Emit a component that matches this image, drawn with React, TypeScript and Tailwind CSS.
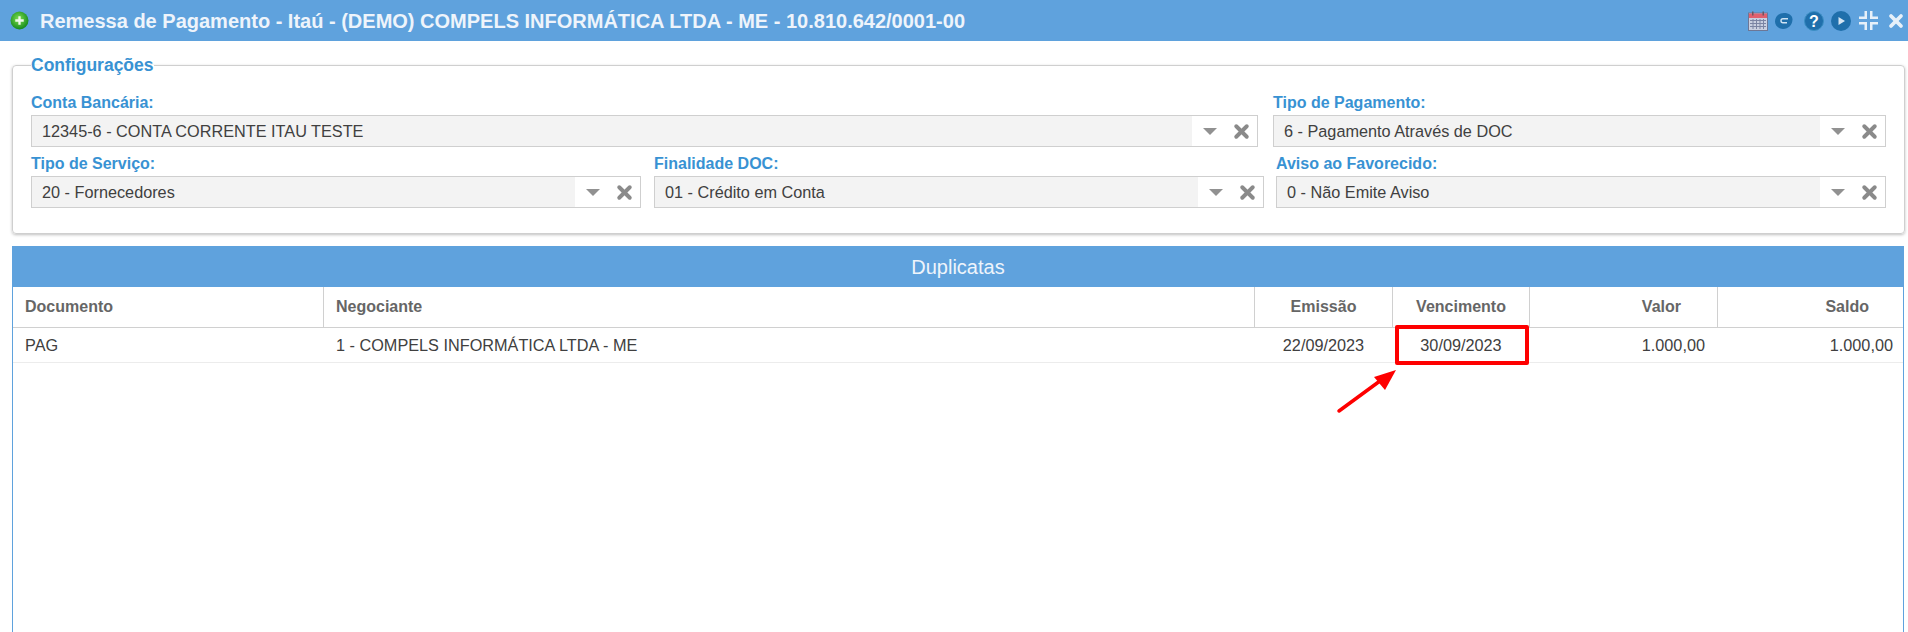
import { X } from 'lucide-react'

const FONT = "font-['Liberation_Sans',Arial,sans-serif]"

const COLUMNS = [
  { label: 'Documento', value: 'PAG', width: 'w-[311px]', head: 'text-left pl-3', cell: 'text-left pl-3' },
  { label: 'Negociante', value: '1 - COMPELS INFORMÁTICA LTDA - ME', width: 'w-[931px]', head: 'text-left pl-3', cell: 'text-left pl-3' },
  { label: 'Emissão', value: '22/09/2023', width: 'w-[138px]', head: 'text-center', cell: 'text-center' },
  { label: 'Vencimento', value: '30/09/2023', width: 'w-[137px]', head: 'text-center', cell: 'text-center' },
  { label: 'Valor', value: '1.000,00', width: 'w-[188px]', head: 'text-right pr-[36px]', cell: 'text-right pr-3' },
  { label: 'Saldo', value: '1.000,00', width: 'flex-1', head: 'text-right pr-[34px]', cell: 'text-right pr-[10px]' },
]

function Field({ label, value, width }: { label: string; value: string; width: string }) {
  return (
    <div className={width}>
      <div className="h-[24px] text-[16px] leading-[23px] font-bold text-[#3892d3]">{label}</div>
      <div className="flex h-[32px] border border-[#cfcfcf] bg-white">
        <div className="flex flex-1 items-center bg-[#f3f3f3] pl-[10px] text-[16.25px] text-[#404040]">{value}</div>
        <div className="flex w-[65px] items-center pl-[11px]">
          <div className="h-0 w-0 border-x-[7px] border-t-[7px] border-x-transparent border-t-[#919191]" />
          <X size={21} strokeWidth={4.500} className="ml-[14px] text-[#8a8a8a]" />
        </div>
      </div>
    </div>
  )
}

function HeaderIcons() {
  return (
    <div className="ml-auto flex items-center">
      {/* calendario */}
      <svg width="20" height="20" viewBox="0 0 20 20" className="mr-[7px]">
        <rect x="0.5" y="2" width="19" height="17.5" fill="#c9cfe0" stroke="#6d7796" />
        <rect x="1" y="2.5" width="18" height="4.5" fill="#e0606e" />
        <rect x="4" y="0.5" width="1.5" height="4" fill="#6b5560" />
        <rect x="14.5" y="0.5" width="1.5" height="4" fill="#6b5560" />
        <path d="M2 9.5h16M2 12.5h16M2 15.5h16M5 8v10M8.5 8v10M12 8v10M15.5 8v10" stroke="#7b84a3" strokeWidth="1" />
      </svg>
      {/* chat */}
      <svg width="18" height="18" viewBox="0 0 18 18" className="mr-[11px]">
        <path d="M9 1c5 0 8.500 2.500 8.500 6.500 0 5-4 9.500-9.500 9.500-4.500 0-8-3.500-8-7.500C0 4.500 4 1 9 1z" fill="#1f6fab" />
        <path d="M13 6.800H8a2 2 0 0 0 0 4h4" fill="none" stroke="#cfe3f3" strokeWidth="1.400" />
      </svg>
      {/* ajuda */}
      <svg width="20" height="20" viewBox="0 0 20 20" className="mr-[7px]">
        <circle cx="10" cy="10" r="9.500" fill="#1f6fab" stroke="#3c8fc4" />
        <text x="10" y="15.500" textAnchor="middle" fontSize="16" fontWeight="bold" fill="#fff" fontFamily="Liberation Sans">?</text>
      </svg>
      {/* play */}
      <svg width="20" height="20" viewBox="0 0 20 20" className="mr-[8px]">
        <circle cx="10" cy="10" r="10" fill="#1f6fab" />
        <path d="M7.500 6l6.500 4-6.500 4z" fill="#d6e6f3" />
      </svg>
      {/* recolher */}
      <svg width="19" height="19" viewBox="0 0 19 19" className="mr-[8px]">
        <path d="M5.500 0H8v8H0V5.500h5.500zM11 0h2.500v5.500H19V8h-8zM0 11h8v8H5.500v-5.500H0zM11 11h8v2.500h-5.500V19H11z" fill="#e6f0f9" />
      </svg>
      <X size={20} strokeWidth={4.500} className="mr-[2px] text-[#e6f0f9]" />
    </div>
  )
}

export default function App() {
  return (
    <div className={`${FONT} relative h-[632px] w-[1908px] overflow-hidden bg-white`}>
      <div className="flex h-[41px] items-center bg-[#5fa2dd] pl-[10px]">
        <svg width="19" height="19" viewBox="0 0 18 18" className="mr-[11px]">
          <defs>
            <radialGradient id="verde" cx="45%" cy="40%" r="60%">
              <stop offset="0%" stopColor="#7fe04f" />
              <stop offset="100%" stopColor="#138a1c" />
            </radialGradient>
          </defs>
          <circle cx="9" cy="9" r="8.500" fill="url(#verde)" />
          <path d="M9 5v8M5 9h8" stroke="#eef9ea" strokeWidth="2.200" />
        </svg>
        <span className="text-[20px] font-bold text-[#eef4fb]">
          Remessa de Pagamento - Itaú - (DEMO) COMPELS INFORMÁTICA LTDA - ME - 10.810.642/0001-00
        </span>
        <HeaderIcons />
      </div>

      <fieldset className="mt-[14px] mr-[4px] ml-[12px] h-[179px] rounded-[4px] border border-[#cfcfcf] px-[18px] shadow-[0_1px_3px_rgba(0,0,0,0.25)]">
        <legend className="px-0 text-[17.5px] leading-[20px] font-bold text-[#3892d3]">Configurações</legend>
        <div className="mt-[16px] flex gap-[15px]">
          <Field label="Conta Bancária:" value="12345-6 - CONTA CORRENTE ITAU TESTE" width="w-[1227px]" />
          <Field label="Tipo de Pagamento:" value="6 - Pagamento Através de DOC" width="w-[613px]" />
        </div>
        <div className="mt-[5px] flex">
          <Field label="Tipo de Serviço:" value="20 - Fornecedores" width="w-[610px]" />
          <div className="w-[13px]" />
          <Field label="Finalidade DOC:" value="01 - Crédito em Conta" width="w-[610px]" />
          <div className="w-[12px]" />
          <Field label="Aviso ao Favorecido:" value="0 - Não Emite Aviso" width="w-[610px]" />
        </div>
      </fieldset>

      <div className="mt-[12px] mr-[4px] ml-[12px] h-[386px] border-x border-[#5fa2dd]">
        <div className="-mx-px flex h-[41px] items-center justify-center bg-[#5fa2dd] text-[20px] text-[#eef4fb]">
          Duplicatas
        </div>
        <div className="flex h-[41px] border-b border-[#d0d0d0]">
          {COLUMNS.map((col, i) => (
            <div
              key={col.label}
              className={`${col.width} ${col.head} ${i < 5 ? 'border-r border-[#d0d0d0]' : ''} text-[16px] leading-[39px] font-bold text-[#666666]`}
            >
              {col.label}
            </div>
          ))}
        </div>
        <div className="flex h-[35px] border-b border-[#ececec]">
          {COLUMNS.map((col, i) => (
            <div
              key={col.label}
              className={`${col.width} ${col.cell} ${i < 5 ? 'border-r border-transparent' : ''} text-[16.25px] leading-[34px] text-[#404040]`}
            >
              {col.value}
            </div>
          ))}
        </div>
      </div>

      {/* marcacao vermelha do print */}
      <div className="absolute top-[325px] left-[1395px] h-[40px] w-[134px] rounded-[2px] border-[4px] border-[#fe0000]" />
      <svg width="70" height="50" viewBox="0 0 70 50" className="absolute top-[366px] left-[1334px]">
        <path d="M5 45L50 12" stroke="#fe0000" strokeWidth="3.500" strokeLinecap="round" />
        <path d="M62 4L40 11L51 24z" fill="#fe0000" />
      </svg>
    </div>
  )
}
